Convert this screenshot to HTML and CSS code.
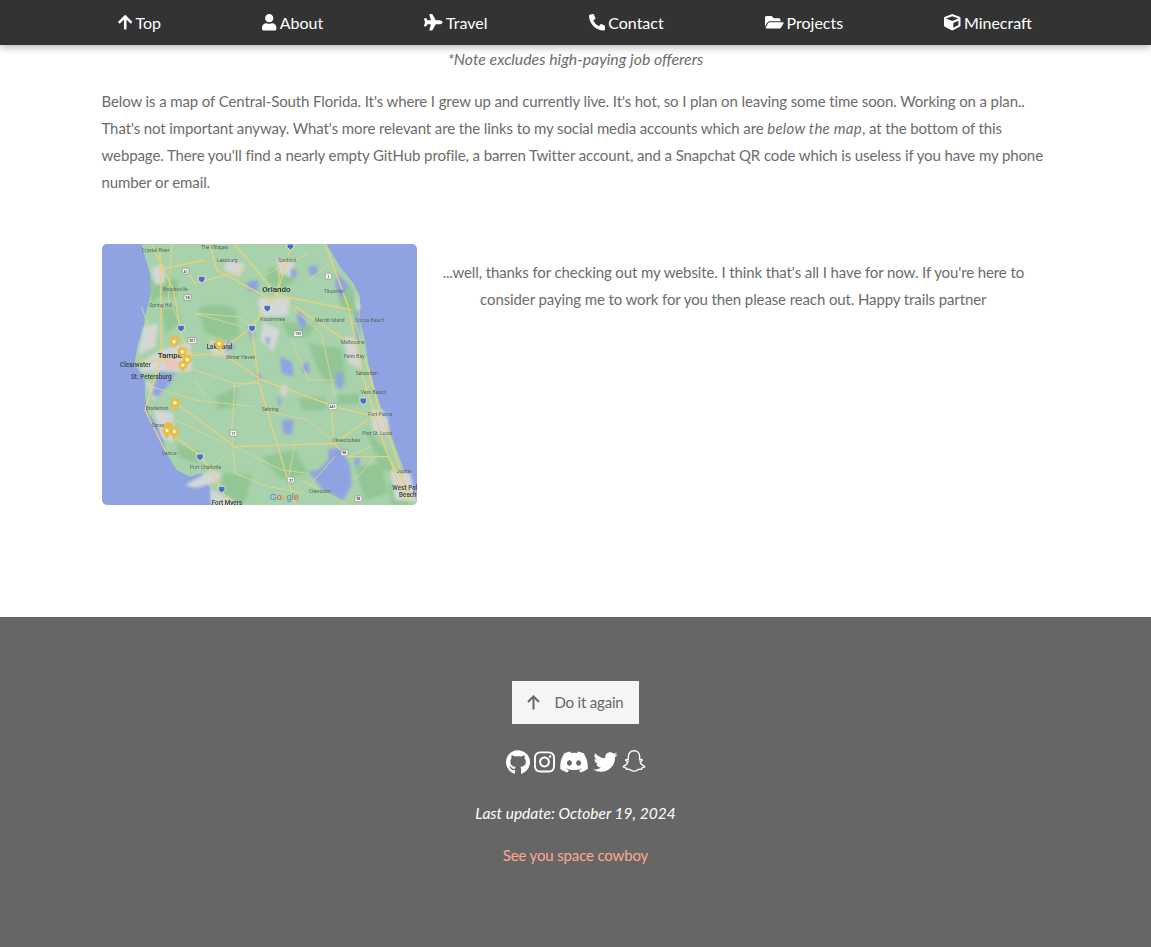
FILE: index.html
```html
<!DOCTYPE html>
<html lang="en">
<head>
<meta charset="utf-8">
<title>Home</title>
<link rel="stylesheet" href="styles.css">
</head>
<body>
<nav class="nav">
  <a class="nav-link" href="#"><svg class="nav-icon" viewBox="0 0 448 512"><path d="M34.9 289.5l-22.2-22.2c-9.4-9.4-9.4-24.6 0-33.9L207 39c9.4-9.4 24.6-9.4 33.9 0l194.3 194.3c9.4 9.4 9.4 24.6 0 33.9L413 289.4c-9.5 9.5-25 9.3-34.3-.4L264 168.6V456c0 13.3-10.7 24-24 24h-32c-13.3 0-24-10.7-24-24V168.6L69.2 289.1c-9.3 9.8-24.8 10-34.3.4z"/></svg>Top</a>
  <a class="nav-link" href="#"><svg class="nav-icon" viewBox="0 0 448 512"><path d="M224 256c70.7 0 128-57.3 128-128S294.7 0 224 0 96 57.3 96 128s57.3 128 128 128zm89.6 32h-16.7c-22.2 10.2-46.9 16-72.9 16s-50.6-5.8-72.9-16h-16.7C60.2 288 0 348.2 0 422.4V464c0 26.5 21.5 48 48 48h352c26.5 0 48-21.5 48-48v-41.6c0-74.2-60.2-134.4-134.4-134.4z"/></svg>About</a>
  <a class="nav-link" href="#"><svg class="nav-icon" viewBox="0 0 576 512"><path d="M480 192H365.71L260.61 8.06A16.014 16.014 0 0 0 246.71 0h-65.5c-10.63 0-18.3 10.17-15.38 20.39L214.86 192H112l-43.2-57.6c-3.02-4.03-7.77-6.4-12.8-6.4H16.01C5.6 128-2.04 137.78.49 147.88L32 256 .49 364.12C-2.04 374.22 5.6 384 16.01 384H56c5.04 0 9.78-2.37 12.8-6.4L112 320h102.86l-49.03 171.6c-2.92 10.22 4.75 20.4 15.38 20.4h65.5c5.74 0 11.04-3.08 13.89-8.06L365.71 320H480c35.35 0 96-28.65 96-64s-60.65-64-96-64z"/></svg>Travel</a>
  <a class="nav-link" href="#"><svg class="nav-icon" viewBox="0 0 512 512"><path d="M497.39 361.8l-112-48a24 24 0 0 0-28 6.9l-49.6 60.6A370.66 370.66 0 0 1 130.6 204.11l60.6-49.6a23.94 23.94 0 0 0 6.9-28l-48-112A24.16 24.16 0 0 0 122.6.61l-104 24A24 24 0 0 0 0 48c0 256.5 207.9 464 464 464a24 24 0 0 0 23.4-18.6l24-104a24.29 24.29 0 0 0-14.01-27.6z"/></svg>Contact</a>
  <a class="nav-link" href="#"><svg class="nav-icon" viewBox="0 0 576 512"><path d="M572.694 292.093L500.27 416.248A63.997 63.997 0 0 1 444.989 448H45.025c-18.523 0-30.064-20.093-20.731-36.093l72.424-124.155A64 64 0 0 1 152 256h399.964c18.523 0 30.064 20.093 20.73 36.093zM152 224h328v-48c0-26.51-21.49-48-48-48H272l-64-64H48C21.49 64 0 85.49 0 112v278.046l69.077-118.418C86.214 242.25 117.989 224 152 224z"/></svg>Projects</a>
  <a class="nav-link" href="#"><svg class="nav-icon" viewBox="0 0 512 512"><path d="M239.1 6.3l-208 78c-18.7 7-31.1 25-31.1 45v225.1c0 18.2 10.3 34.8 26.5 42.9l208 104c13.5 6.8 29.4 6.8 42.9 0l208-104c16.3-8.1 26.5-24.8 26.5-42.9V129.3c0-20-12.4-37.9-31.1-44.9l-208-78C262 2.2 250 2.2 239.1 6.3zM256 68.4l192 72v1.1l-192 78-192-78v-1.1l192-72zm32 356V275.5l160-65v133.9l-160 80z"/></svg>Minecraft</a>
</nav>

<main class="content">
  <p class="note">*Note excludes high-paying job offerers</p>
  <p class="intro">Below is a map of Central-South Florida. It's where I grew up and currently live. It's hot, so I plan on leaving some time soon. Working on a plan.. That's not important anyway. What's more relevant are the links to my social media accounts which are <em>below the map</em>, at the bottom of this webpage. There you'll find a nearly empty GitHub profile, a barren Twitter account, and a Snapchat QR code which is useless if you have my phone number or email.</p>
  <section class="map-row">
    <svg class="map" viewBox="21 12 945 783" role="img" aria-label="Map of Central-South Florida">
      <rect class="water" x="21" y="12" width="945" height="783"/>
      <path class="land" d="M140 12L150 50L165 100L170 150L160 190L150 230L145 270L130 310L122 350L118 375L135 395L150 420L150 470L160 520L190 560L205 600L215 640L245 690L285 710L320 700L345 745L350 795L966 795L966 785L925 685L870 535L825 405L810 300L795 240L795 170L775 130L735 80L695 12Z"/>
      <g class="forest soft">
        <path d="M310 205Q360 185 420 205L435 290L390 300L330 280Z"/>
        <path d="M165 120L250 115L245 175L190 170L170 190Z"/>
        <path d="M385 700L470 705L450 790L375 770Z"/>
        <path d="M520 85L590 80L600 125L560 145L515 125Z"/>
        <path d="M640 310L740 325L755 440L690 425L660 370Z"/>
        <path d="M610 475L690 470L695 510L620 510Z"/>
        <path d="M725 465L790 460L800 490L730 495Z"/>
        <path d="M810 560L880 640L905 700L855 690L830 620Z"/>
        <path d="M245 610L320 640L305 670L250 650Z"/>
        <path d="M560 245L660 255L640 290L580 290Z"/>
        <path d="M730 110L775 150L790 235L735 195Z"/>
        <path d="M200 210L240 195L260 250L215 280Z"/>
        <path d="M500 650L600 630L640 700L560 720Z"/>
        <path d="M780 680L860 670L880 760L810 780Z"/>
        <path d="M360 470L430 440L420 500L370 510Z"/>
        <path d="M880 730L930 720L950 795L890 795Z"/>
      </g>
      <g class="urban soft">
        <path d="M170 80L205 75L210 130L180 135Z"/>
        <path d="M145 260L190 250L180 320L130 345Z"/>
        <path d="M200 330L285 305L290 395L215 395L135 395L140 365Z"/>
        <path d="M150 420L205 455L175 480Z"/>
        <path d="M175 510L235 520L235 610L200 590Z"/>
        <path d="M490 175L585 170L580 225L495 232Z"/>
        <path d="M505 245L555 270L535 335L495 300Z"/>
        <path d="M345 300L410 315L400 350L350 345Z"/>
        <path d="M745 290L785 295L800 385L760 370Z"/>
        <path d="M780 155L797 205L785 210Z"/>
        <path d="M825 510L875 510L885 590L835 575Z"/>
        <path d="M885 690L945 700L966 785L900 780Z"/>
        <path d="M400 55L450 75L430 110L385 90Z"/>
        <path d="M545 55L600 65L590 110L550 100Z"/>
        <path d="M270 735L350 690L380 700L370 725L300 745Z"/>
        <path d="M345 750L400 770L430 795L350 795Z"/>
        <path d="M560 430L580 440L575 470L555 460Z"/>
      </g>
      <path class="pink soft" d="M205 360L245 355L250 385L220 390Z"/>
      <g class="water soft">
        <path d="M195 395L240 400L225 430L190 470L170 465L180 430Z"/>
        <path d="M455 125L490 120L488 155L460 150Z"/>
        <path d="M555 350L590 365L597 410L560 400Z"/>
        <path d="M560 540L595 540L590 585L565 580Z"/>
        <path d="M700 630L735 620L765 675L770 735L745 780L685 750L665 725L640 695L670 690L700 660Z"/>
        <path d="M610 210L635 240L625 275L605 240Z"/>
        <path d="M725 100L760 135L740 180L720 135Z"/>
        <path d="M780 215L790 215L795 300L785 300Z"/>
        <path d="M400 300L420 320L390 340Z"/>
        <path d="M480 400L500 405L495 430Z"/>
        <path d="M720 395L745 400L740 450L725 440Z"/>
        <path d="M455 260L480 280L470 300Z"/>
        <path d="M640 80L665 75L670 105L645 105Z"/>
        <path d="M545 470L560 480L552 505Z"/>
        <path d="M585 90L600 85L608 110L590 110Z"/>
        <path d="M840 420L850 420L885 530L872 530Z"/>
        <path d="M620 375L640 365L645 395L625 400Z"/>
        <path d="M780 650L795 655L790 680L778 675Z"/>
        <path d="M510 290L525 295L520 320Z"/>
      </g>
      <g class="road-major">
        <path d="M170 12L235 150L260 290L290 350M690 12L760 200L800 400L870 620L930 780M545 165L470 260L370 340L250 350L130 370M545 165L770 210M380 340L500 420L720 500L840 530M470 260L490 420L530 560L600 790M230 480L420 620L720 610L830 530M215 570L320 650L380 745L400 795M710 490L715 610L760 650L880 650L945 760M420 12L545 165L590 12M450 90L300 130L280 100"/>
        <path d="M195 30L200 350L150 510L215 640M820 380L850 500L900 640L945 790M345 12L365 90L540 185M210 85L330 60M600 200L750 300L800 310"/>
      </g>
      <g class="road-minor">
        <path d="M230 12L220 180L260 260M560 60L545 165L680 280L720 470M420 430L410 570L420 700L520 740L630 760M170 440L300 480L480 500M620 720L750 790M720 650L640 740M300 220L430 230L470 260M780 240L830 430L800 470M140 200L180 320"/>
        <path d="M270 380L420 430L490 430M500 510L640 540L710 600M420 620L560 690L640 700M520 100L640 40M640 120L720 60M300 420L330 470M590 300L640 420L720 420M240 540L390 610M600 610L580 720M830 620L760 650M330 700L400 640M850 640L780 720M440 260L300 220M500 420L420 440"/>
      </g>
      <g class="shield">
        <rect x="262" y="85" width="20" height="17" rx="4"/><rect x="267" y="164" width="22" height="17" rx="4"/><rect x="279" y="294" width="26" height="17" rx="4"/><rect x="596" y="272" width="26" height="18" rx="4"/><rect x="691" y="100" width="19" height="17" rx="4"/><rect x="700" y="491" width="26" height="18" rx="4"/><rect x="405" y="571" width="21" height="18" rx="4"/><rect x="738" y="630" width="21" height="17" rx="4"/><rect x="577" y="711" width="22" height="18" rx="4"/><rect x="779" y="768" width="22" height="17" rx="4"/>
      </g>
      <g class="shield-text">
        <text x="272" y="98">41</text><text x="278" y="177">98</text><text x="292" y="307">301</text><text x="609" y="286">192</text><text x="700" y="113">1</text><text x="713" y="505">441</text><text x="415" y="585">17</text><text x="748" y="643">98</text><text x="588" y="725">27</text><text x="790" y="781">98</text>
      </g>
      <g class="interstate">
        <path d="M310 109h20v12l-10 8-10-8zM248 256h20v12l-10 8-10-8zM461 256h20v12l-10 8-10-8zM507 196h20v12l-10 8-10-8zM576 12h20v10l-10 8-10-8zM795 474h20v12l-10 8-10-8zM305 642h20v12l-10 8-10-8zM370 739h20v12l-10 8-10-8z"/>
      </g>
      <g class="label">
        <text x="140" y="36">Crystal River</text><text x="318" y="28">The Villages</text><text x="366" y="67">Leesburg</text><text x="550" y="67">Sanford</text>
        <text x="205" y="154">Brooksville</text><text x="686" y="158">Titusville</text><text x="163" y="200">Spring Hill</text>
        <text x="496" y="242">Kissimmee</text><text x="660" y="245">Merritt Island</text><text x="780" y="245">Cocoa Beach</text>
        <text x="738" y="313">Melbourne</text><text x="746" y="353">Palm Bay</text><text x="392" y="356">Winter Haven</text>
        <text x="782" y="404">Sebastian</text><text x="798" y="463">Vero Beach</text><text x="500" y="512">Sebring</text>
        <text x="152" y="509">Bradenton</text><text x="820" y="527">Fort Pierce</text><text x="170" y="562">Sarasota</text>
        <text x="802" y="584">Port St. Lucie</text><text x="712" y="607">Okeechobee</text><text x="200" y="644">Venice</text>
        <text x="285" y="686">Port Charlotte</text><text x="642" y="759">Clewiston</text><text x="905" y="700">Jupiter</text>
      </g>
      <g class="label-mid">
        <text x="75" y="380">Clearwater</text><text x="108" y="418">St. Petersburg</text><text x="335" y="326">Lakeland</text>
        <text x="350" y="794">Fort Myers</text><text x="892" y="751">West Palm</text><text x="912" y="771">Beach</text>
      </g>
      <g class="label-big">
        <text x="502" y="155">Orlando</text><text x="188" y="354">Tampa</text>
      </g>
      <g class="pins">
        <path d="M237 325c-8-10-14-14-14-23a14 14 0 0 1 28 0c0 9-6 13-14 23z"/>
        <path d="M373 333c-8-10-14-14-14-23a14 14 0 0 1 28 0c0 9-6 13-14 23z"/>
        <path d="M262 355c-8-10-14-14-14-21a14 14 0 0 1 28 0c0 7-6 11-14 21z"/>
        <path d="M277 376c-8-10-14-14-14-19a14 14 0 0 1 28 0c0 5-6 9-14 19z"/>
        <path d="M263 395c-8-10-14-14-14-19a14 14 0 0 1 28 0c0 5-6 9-14 19z"/>
        <path d="M240 512c-8-10-14-14-14-24a14 14 0 0 1 28 0c0 10-6 14-14 24z"/>
        <path d="M220 580c-8-10-14-14-14-20a14 14 0 0 1 28 0c0 6-6 10-14 20z"/>
        <path d="M216 595c-8-10-14-14-14-24a14 14 0 0 1 28 0c0 10-6 14-14 24z"/>
        <path d="M238 597c-8-10-14-14-14-23a14 14 0 0 1 28 0c0 9-6 13-14 23z"/>
      </g>
      <path class="pin-star" d="M237 298l2.1 4.4 4.9.6-3.6 3.4.9 4.9-4.3-2.4-4.3 2.4.9-4.9-3.6-3.4 4.9-.6zM373 304l2.1 4.4 4.9.6-3.6 3.4.9 4.9-4.3-2.4-4.3 2.4.9-4.9-3.6-3.4 4.9-.6zM262 328l2.1 4.4 4.9.6-3.6 3.4.9 4.9-4.3-2.4-4.3 2.4.9-4.9-3.6-3.4 4.9-.6zM277 352l2.1 4.4 4.9.6-3.6 3.4.9 4.9-4.3-2.4-4.3 2.4.9-4.9-3.6-3.4 4.9-.6zM263 368l2.1 4.4 4.9.6-3.6 3.4.9 4.9-4.3-2.4-4.3 2.4.9-4.9-3.6-3.4 4.9-.6zM240 481l2.1 4.4 4.9.6-3.6 3.4.9 4.9-4.3-2.4-4.3 2.4.9-4.9-3.6-3.4 4.9-.6zM216 564l2.1 4.4 4.9.6-3.6 3.4.9 4.9-4.3-2.4-4.3 2.4.9-4.9-3.6-3.4 4.9-.6zM238 567l2.1 4.4 4.9.6-3.6 3.4.9 4.9-4.3-2.4-4.3 2.4.9-4.9-3.6-3.4 4.9-.6z"/>
      <text class="google" x="524" y="779"><tspan class="g-blue">G</tspan><tspan class="g-red">o</tspan><tspan class="g-yellow">o</tspan><tspan class="g-blue">g</tspan><tspan class="g-green">l</tspan><tspan class="g-red">e</tspan></text>
    </svg>
    <p class="closing">...well, thanks for checking out my website. I think that's all I have for now. If you're here to consider paying me to work for you then please reach out. Happy trails partner</p>
  </section>
</main>

<footer class="footer">
  <a class="button" href="#"><svg class="button-icon" viewBox="1.5 1 13 15"><path d="M8 15.5V2.5M2.500 8L8 2.400 13.500 8"/></svg><span>Do it again</span></a>
  <div class="socials">
    <svg class="social" width="24" height="24" viewBox="0 8 496 484"><path d="M244.8 8C106.1 8 0 113.3 0 252c0 110.9 69.8 205.8 169.5 239.2 12.8 2.3 17.3-5.6 17.3-12.1 0-6.2-.3-40.4-.3-61.4 0 0-70 15-84.7-29.8 0 0-11.4-29.1-27.8-36.6 0 0-22.9-15.7 1.6-15.4 0 0 24.9 2 38.6 25.8 21.9 38.6 58.6 27.5 72.9 20.9 2.3-16 8.8-27.1 16-33.7-55.9-6.2-112.3-14.3-112.3-110.5 0-27.5 7.6-41.3 23.6-58.9-2.6-6.5-11.1-33.3 2.6-67.9 20.9-6.5 69 27 69 27 20-5.6 41.5-8.5 62.8-8.5s42.8 2.9 62.8 8.5c0 0 48.1-33.6 69-27 13.7 34.7 5.2 61.4 2.6 67.9 16 17.7 25.8 31.5 25.8 58.9 0 96.5-58.9 104.2-114.8 110.5 9.2 7.9 17 22.9 17 46.4 0 33.7-.3 75.4-.3 83.6 0 6.5 4.6 14.4 17.3 12.1C428.2 457.8 496 362.9 496 252 496 113.3 383.5 8 244.8 8z"/></svg>
    <svg class="social" width="21" height="24" viewBox="0 0 448 512"><path d="M224.1 141c-63.6 0-114.9 51.3-114.9 114.9s51.3 114.9 114.9 114.9S339 319.5 339 255.9 287.7 141 224.1 141zm0 189.6c-41.1 0-74.7-33.5-74.7-74.7s33.5-74.7 74.7-74.7 74.7 33.5 74.7 74.7-33.6 74.7-74.7 74.7zm146.4-194.3c0 14.9-12 26.8-26.8 26.8-14.9 0-26.8-12-26.8-26.8s12-26.8 26.8-26.8 26.8 12 26.8 26.8zm76.1 27.2c-1.7-35.9-9.9-67.7-36.2-93.9-26.2-26.2-58-34.4-93.9-36.2-37-2.1-147.9-2.1-184.9 0-35.8 1.7-67.6 9.9-93.9 36.1s-34.4 58-36.2 93.9c-2.1 37-2.1 147.9 0 184.9 1.7 35.9 9.9 67.7 36.2 93.9s58 34.4 93.9 36.2c37 2.1 147.9 2.1 184.9 0 35.9-1.7 67.7-9.9 93.9-36.2 26.2-26.2 34.4-58 36.2-93.9 2.1-37 2.1-147.8 0-184.8zM398.8 388c-7.8 19.6-22.9 34.7-42.6 42.6-29.5 11.7-99.5 9-132.1 9s-102.7 2.6-132.1-9c-19.6-7.8-34.7-22.9-42.6-42.6-11.7-29.5-9-99.5-9-132.1s-2.6-102.7 9-132.1c7.8-19.6 22.9-34.7 42.6-42.6 29.5-11.7 99.5-9 132.1-9s102.7-2.6 132.1 9c19.6 7.8 34.7 22.9 42.6 42.6 11.7 29.5 9 99.5 9 132.1s2.7 102.7-9 132.1z"/></svg>
    <svg class="social" width="30" height="24" viewBox="0 0 640 512"><path d="M524.531,69.836a1.5,1.5,0,0,0-.764-.7A485.065,485.065,0,0,0,404.081,32.03a1.816,1.816,0,0,0-1.923.91,337.461,337.461,0,0,0-14.9,30.6,447.848,447.848,0,0,0-134.426,0,309.541,309.541,0,0,0-15.135-30.6,1.89,1.89,0,0,0-1.924-.91A483.689,483.689,0,0,0,116.085,69.137a1.712,1.712,0,0,0-.788.676C39.068,183.651,18.186,294.69,28.43,404.354a2.016,2.016,0,0,0,.765,1.375A487.666,487.666,0,0,0,176.02,479.918a1.9,1.9,0,0,0,2.063-.676A348.2,348.2,0,0,0,208.12,430.4a1.86,1.86,0,0,0-1.019-2.588,321.173,321.173,0,0,1-45.868-21.853,1.885,1.885,0,0,1-.185-3.126c3.082-2.309,6.166-4.711,9.109-7.137a1.819,1.819,0,0,1,1.9-.256c96.229,43.917,200.41,43.917,295.5,0a1.812,1.812,0,0,1,1.924.233c2.944,2.426,6.027,4.851,9.132,7.16a1.884,1.884,0,0,1-.162,3.126,301.407,301.407,0,0,1-45.89,21.83,1.875,1.875,0,0,0-1,2.611,391.055,391.055,0,0,0,30.014,48.815,1.864,1.864,0,0,0,2.063.7A486.048,486.048,0,0,0,610.7,405.729a1.882,1.882,0,0,0,.765-1.352C623.729,277.594,590.933,167.465,524.531,69.836ZM222.491,337.58c-28.972,0-52.844-26.587-52.844-59.239S193.056,219.1,222.491,219.1c29.665,0,53.306,26.82,52.843,59.239C275.334,310.993,251.924,337.58,222.491,337.58Zm195.38,0c-28.971,0-52.843-26.587-52.843-59.239S388.437,219.1,417.871,219.1c29.667,0,53.307,26.82,52.844,59.239C470.715,310.993,447.538,337.58,417.871,337.58Z"/></svg>
    <svg class="social" width="25" height="24" viewBox="0 0 512 512"><path d="M459.37 151.716c.325 4.548.325 9.097.325 13.645 0 138.72-105.583 298.558-298.558 298.558-59.452 0-114.68-17.219-161.137-47.106 8.447.974 16.568 1.299 25.34 1.299 49.055 0 94.213-16.568 130.274-44.832-46.132-.975-84.792-31.188-98.112-72.772 6.498.974 12.995 1.624 19.818 1.624 9.421 0 18.843-1.3 27.614-3.573-48.081-9.747-84.143-51.98-84.143-102.985v-1.299c13.969 7.797 30.214 12.67 47.431 13.319-28.264-18.843-46.781-51.005-46.781-87.391 0-19.492 5.197-37.36 14.294-52.954 51.655 63.675 129.3 105.258 216.365 109.807-1.624-7.797-2.599-15.918-2.599-24.04 0-57.828 46.782-104.934 104.934-104.934 30.213 0 57.502 12.67 76.67 33.137 23.715-4.548 46.456-13.32 66.599-25.34-7.798 24.366-24.366 44.833-46.132 57.827 21.117-2.273 41.584-8.122 60.426-16.243-14.292 20.791-32.161 39.308-52.628 54.253z"/></svg>
    <svg class="social social-outline" width="24" height="24" viewBox="1 .5 22 23"><path d="M12 1.2c3.4 0 5.4 2.5 5.4 5.5v3.2l1.7-.4c.9 0 1.1 1 .3 1.4l-1.5.9c.6 2.1 2.1 3.6 4 4.2.5.2.4.8 0 1-1 .4-1.8.6-2.4.8l-.3 1.2c-1.3-.2-2.6-.2-3.6.5-1 .7-1.7 1.3-3.6 1.3s-2.6-.6-3.6-1.3c-1-.7-2.3-.7-3.6-.5l-.3-1.2c-.6-.2-1.4-.4-2.4-.8-.4-.2-.5-.8 0-1 1.9-.6 3.4-2.1 4-4.2l-1.5-.9c-.8-.4-.6-1.4.3-1.4l1.7.4V6.7c0-3 2-5.5 5.4-5.5z"/></svg>
  </div>
  <p class="updated">Last update: October 19, 2024</p>
  <a class="farewell" href="#">See you space cowboy</a>
</footer>
</body>
</html>
```
FILE: styles.css
```css
* { box-sizing: border-box; }

html, body { margin: 0; padding: 0; }

body {
  font-family: Lato, "Open Sans", sans-serif;
  font-size: 15px;
  line-height: 27px;
  color: #6c6c6c;
  background: #fff;
}

.nav {
  position: sticky;
  top: 0;
  z-index: 5;
  height: 45px;
  padding: 0 119px 0 118px;
  display: flex;
  justify-content: space-between;
  align-items: center;
  background: #333;
  box-shadow: 0 2px 8px rgba(0, 0, 0, .3);
}

.nav-link {
  display: flex;
  align-items: center;
  gap: 3px;
  color: #fff;
  font-size: 16px;
  text-decoration: none;
}

.nav-icon {
  height: 16.5px;
  width: auto;
  fill: #fff;
  flex: none;
}

.content {
  width: 948px;
  margin: 0 auto;
  height: 572px;
}

.note {
  margin: 0;
  text-align: center;
  font-style: italic;
  font-size: 15.8px;
}

.intro {
  margin: 16px 0 0;
  letter-spacing: -.11px;
}

.intro em { letter-spacing: .25px; }

.map-row {
  display: flex;
  align-items: flex-start;
  margin-top: 48px;
}

.map {
  flex: none;
  width: 315px;
  height: 261px;
  margin-left: .5px;
  border-radius: 5px;
  filter: blur(.4px);
}

.closing {
  flex: 1;
  margin: 0;
  padding: 15px 16px 0;
  text-align: center;
  letter-spacing: -.11px;
}

.soft { filter: blur(4px); }
.water { fill: #8fa3e2; }
.land { fill: #a8d2ab; }
.forest { fill: #92c795; }
.urban { fill: #d3d7d6; }
.pink { fill: #ecc4b8; }
.road-major { fill: none; stroke: #ebd07c; stroke-width: 4; }
.road-minor { fill: none; stroke: #e6d58f; stroke-width: 2.5; }
.shield { fill: #f6f6f2; stroke: #6d7775; stroke-width: 1.5; }
.interstate { fill: #4a6fc0; stroke: #fff; stroke-width: 2; }

.shield-text text {
  font-family: Roboto, sans-serif;
  font-size: 11px;
  font-weight: 500;
  text-anchor: middle;
  fill: #333;
}

.label text {
  font-family: Roboto, sans-serif;
  font-size: 15px;
  fill: #5a6663;
}

.label-mid text {
  font-family: Roboto, sans-serif;
  font-size: 19px;
  font-weight: 500;
  fill: #37423f;
}

.label-big text {
  font-family: Roboto, sans-serif;
  font-size: 24px;
  font-weight: 500;
  fill: #222c2a;
}

.pins { fill: #e8bf45; }
.pin-star { fill: #fff9e6; }

.google { font-family: "Liberation Sans", sans-serif; font-size: 27px; }
.g-blue { fill: #4c82ea; }
.g-red { fill: #dd4f43; }
.g-yellow { fill: #e8b92c; }
.g-green { fill: #3aa757; }

.footer {
  height: 330px;
  padding-top: 64px;
  background: #666;
  display: flex;
  flex-direction: column;
  align-items: center;
}

.button {
  display: flex;
  align-items: center;
  gap: 15px;
  height: 43px;
  padding: 0 16px 0 15px;
  background: #f5f5f5;
  color: #666;
  text-decoration: none;
  letter-spacing: -.2px;
}

.button-icon {
  width: 13px;
  height: 15px;
  fill: none;
  stroke: #666;
  stroke-width: 2;
}

.socials {
  display: flex;
  gap: 4px;
  margin-top: 26px;
}

.social { fill: #fff; display: block; }

.social-outline {
  fill: none;
  stroke: #fff;
  stroke-width: 1.3;
}

.updated {
  margin: 26px 0 0;
  color: #fff;
  font-style: italic;
  font-size: 15.5px;
}

.farewell {
  margin-top: 15px;
  color: #ffa98f;
  text-decoration: none;
  letter-spacing: -.15px;
}
```
